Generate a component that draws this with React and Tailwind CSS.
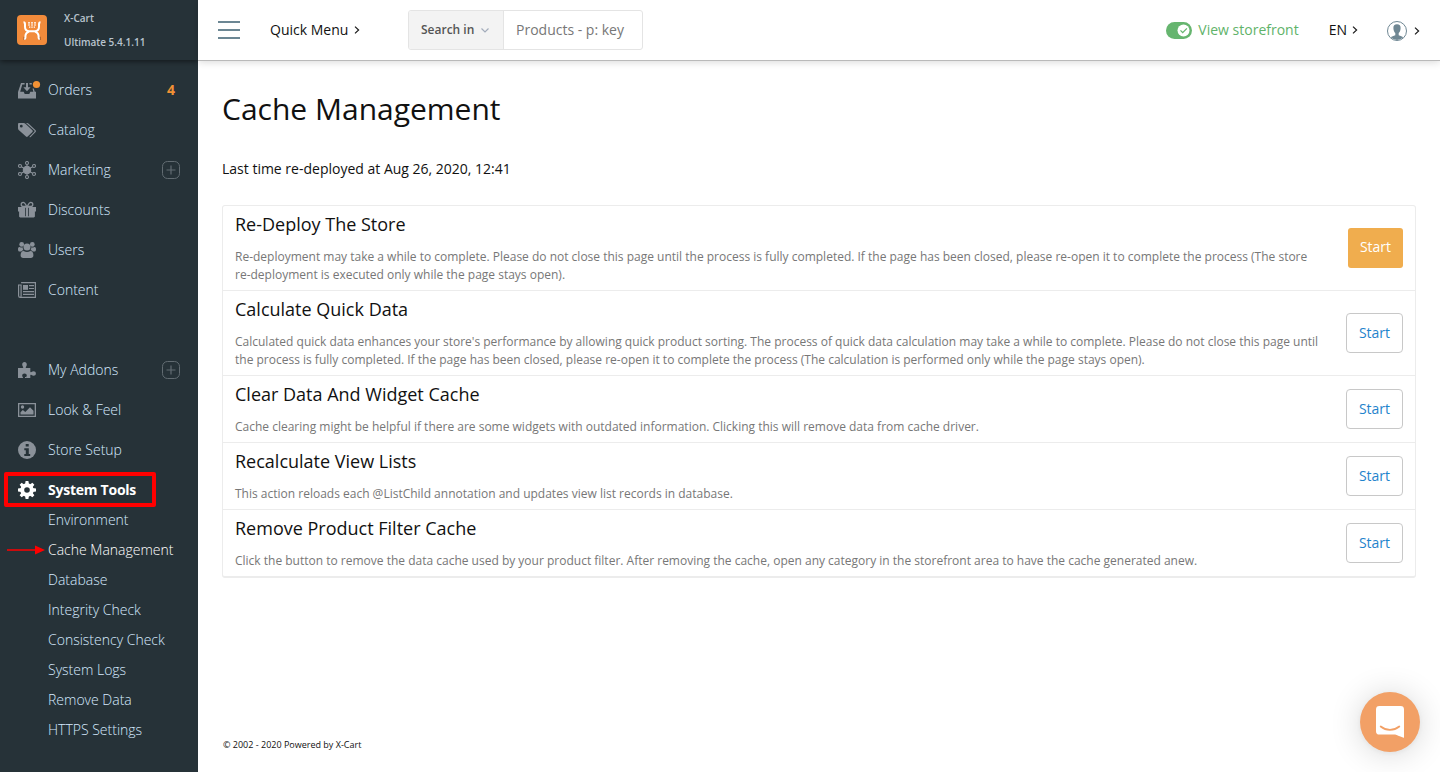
import React from 'react';

const svgProps = { width: 18, height: 18, viewBox: '0 0 18 18', fill: 'currentColor' };

const OrdersIcon = () => (
  <svg {...svgProps} className="overflow-visible">
    <path d="M0 17.500V11L3 2h3.600v1.500H4.300L2.200 10.800h3.500l1 2.200h4.600l1-2.200H18v6.700z" />
    <path d="M8 2h2v4.200h2.600L9 10.200 5.400 6.200H8z" />
    <path d="M11.500 2h2.300v1.500h-2.300zM14.500 7.500h1.300l1 3.500h-1.400z" />
    <circle cx="18.500" cy="3.500" r="3.600" fill="#f19135" />
  </svg>
);

const TagsIcon = () => (
  <svg {...svgProps}>
    <path d="M0 3.200C0 2.500.500 2 1.200 2h4.400c.600 0 1.300.300 1.800.700l7 6.500c.500.500.500 1.200 0 1.700l-4.700 4.700c-.500.500-1.200.500-1.700 0L.700 9.100C.300 8.600 0 8 0 7.300zM3.300 3.800a1.400 1.400 0 1 0 0 2.800 1.400 1.400 0 0 0 0-2.800z" fillRule="evenodd" />
    <path d="M8 2h1c.600 0 1.200.300 1.700.700l6.900 6.500c.500.500.500 1.200 0 1.700L12.700 16c-.500.400-.900.300-1.400-.100l5-5.100c.400-.500.400-.900 0-1.400z" />
  </svg>
);

const MarketingIcon = () => (
  <svg {...svgProps} fill="none" stroke="currentColor" strokeWidth="1.100">
    <circle cx="9" cy="9" r="3.700" fill="currentColor" />
    <path d="M9 3.500v11M3.400 5.800l11.200 6.400M3.400 12.200l11.200-6.400" />
    <circle cx="9" cy="2" r="1.500" />
    <circle cx="9" cy="16" r="1.500" />
    <circle cx="2" cy="5" r="1.500" />
    <circle cx="2" cy="13" r="1.500" />
    <circle cx="16" cy="5" r="1.500" />
    <circle cx="16" cy="13" r="1.500" />
  </svg>
);

const GiftIcon = () => (
  <svg {...svgProps}>
    <path d="M0 6h18v4.500h-1.100v4.800c0 .700-.500 1.200-1.200 1.200H2.300c-.700 0-1.200-.500-1.200-1.200v-4.800H0zm7 .700v8.600h.800V6.700zm3.200 0v8.600h.8V6.700z" fillRule="evenodd" />
    <path d="M8.800 5.500C7.500 3 6.800 1.400 5.200 1.400c-2.700 0-2.600 4.100 0 4.100zM9.200 5.500c1.300-2.500 2-4.100 3.600-4.100 2.700 0 2.600 4.100 0 4.100z" fill="none" stroke="currentColor" strokeWidth="1.300" />
  </svg>
);

const UsersIcon = () => (
  <svg {...svgProps}>
    <circle cx="3.700" cy="3.400" r="2.400" />
    <circle cx="14.300" cy="3.400" r="2.400" />
    <circle cx="9" cy="6" r="3.500" />
    <path d="M0 8.200C0 6.400.700 5.800 1.800 6c1.100.700 1.900.700 2.900.300 0 1.400.400 2.200 1 3-1.200 0-1.800.500-2.400 1.200H1.600C.600 10.500 0 9.700 0 8.200zM18 8.200c0-1.800-.700-2.400-1.800-2.200-1.100.700-1.900.700-2.900.300 0 1.400-.400 2.200-1 3 1.200 0 1.800.500 2.400 1.200h1.700c1 0 1.600-.800 1.600-2.300z" />
    <path d="M2.600 14.200c0-2.600 1-4.300 3-4.300 2.300 1.400 4.500 1.400 6.800 0 2 0 3 1.700 3 4.300 0 1.700-1 2.800-2.600 2.800H5.200c-1.600 0-2.600-1.100-2.600-2.800z" />
  </svg>
);

const NewsIcon = () => (
  <svg {...svgProps} fill="none" stroke="currentColor" strokeWidth="1.200">
    <path d="M3.100 1.600h14.300v14.800H2.200c-1 0-1.600-.600-1.600-1.600V4h2.500v10.800c0 .900-.300 1.600-.900 1.600" />
    <path d="M5 4h5v4.800H5z" fill="currentColor" stroke="none" />
    <path d="M11 4.600h5M11 7.500h5M5 10.600h11M5 13.400h11" />
  </svg>
);

const PuzzleIcon = () => (
  <svg {...svgProps}>
    <path d="M0 7h4.600c.700 0 .900-.300.500-.900C4.500 5.100 4.200 4.300 4.200 3.400 4.200 2 5.100 1 6.500 1s2.300 1 2.300 2.400c0 .900-.300 1.600-.9 2.600-.400.700-.200 1 .600 1h3.800v3.500c0 .700.400.9 1.100.500.800-.500 1.400-.800 2.100-.800 1.400 0 2.400.9 2.400 2.200s-1 2.300-2.400 2.300c-.700 0-1.300-.300-2-.800-.800-.500-1.200-.300-1.200.500V17H8.600c-.800 0-.900-.300-.500-.900.400-.600.700-1.100.700-1.700 0-1.300-1-2-2.300-2s-2.300.700-2.300 2c0 .700.300 1.200.700 1.800.400.500.200.800-.500.800H0z" />
  </svg>
);

const ImageIcon = () => (
  <svg {...svgProps}>
    <path d="M0 2h18v14H0zm1.300 1.300v11.400h15.400V3.300z" fillRule="evenodd" />
    <circle cx="4.500" cy="6" r="1.700" />
    <path d="M2.500 13.500V11.200L4.800 9l2.500 2 4.700-4.800 3.500 3.600v3.700z" />
  </svg>
);

const InfoIcon = () => (
  <svg {...svgProps}>
    <circle cx="9" cy="9" r="9" />
    <path d="M7.700 3h3v2.600h-3zM6.300 7.200h4.500v5.700h1.400V15H6.300v-2.100h1.500V9.300H6.300z" fill="#263238" />
  </svg>
);

const teeth = [0, 45, 90, 135];
const GearIcon = () => (
  <svg {...svgProps}>
    <path d="M9 2.300a6.700 6.700 0 1 0 0 13.400A6.700 6.700 0 0 0 9 2.300zm0 3.900a2.800 2.800 0 1 1 0 5.600 2.800 2.800 0 0 1 0-5.600z" fillRule="evenodd" />
    {teeth.map((a) => (
      <path key={a} d="M7.600 0h2.800l.6 3.500H7zM7 14.500h4l-.6 3.500H7.600z" transform={`rotate(${a} 9 9)`} />
    ))}
  </svg>
);

const PlusIcon = () => (
  <svg {...svgProps} className="text-[#626c72]" fill="none" stroke="currentColor">
    <rect x="0.500" y="0.500" width="17" height="17" rx="5" />
    <path d="M9 4.500v9M4.500 9h9" strokeWidth="1.200" />
  </svg>
);

const Chevron = () => (
  <svg width="6" height="8" viewBox="0 0 6 8" fill="none" stroke="#1a1a1a" strokeWidth="1.200">
    <path d="M1 .6L4.600 4 1 7.400" />
  </svg>
);

const mainItems = [
  { label: 'Orders', Icon: OrdersIcon, count: 4 },
  { label: 'Catalog', Icon: TagsIcon },
  { label: 'Marketing', Icon: MarketingIcon, plus: true },
  { label: 'Discounts', Icon: GiftIcon },
  { label: 'Users', Icon: UsersIcon },
  { label: 'Content', Icon: NewsIcon },
];

const systemItems = [
  { label: 'My Addons', Icon: PuzzleIcon, plus: true },
  { label: 'Look & Feel', Icon: ImageIcon },
  { label: 'Store Setup', Icon: InfoIcon },
];

const toolLinks = [
  'Environment',
  'Cache Management',
  'Database',
  'Integrity Check',
  'Consistency Check',
  'System Logs',
  'Remove Data',
  'HTTPS Settings',
];

const actions = [
  {
    title: 'Re-Deploy The Store',
    text: 'Re-deployment may take a while to complete. Please do not close this page until the process is fully completed. If the page has been closed, please re-open it to complete the process (The store re-deployment is executed only while the page stays open).',
    primary: true,
  },
  {
    title: 'Calculate Quick Data',
    text: "Calculated quick data enhances your store's performance by allowing quick product sorting. The process of quick data calculation may take a while to complete. Please do not close this page until the process is fully completed. If the page has been closed, please re-open it to complete the process (The calculation is performed only while the page stays open).",
  },
  {
    title: 'Clear Data And Widget Cache',
    text: 'Cache clearing might be helpful if there are some widgets with outdated information. Clicking this will remove data from cache driver.',
  },
  {
    title: 'Recalculate View Lists',
    text: 'This action reloads each @ListChild annotation and updates view list records in database.',
  },
  {
    title: 'Remove Product Filter Cache',
    text: 'Click the button to remove the data cache used by your product filter. After removing the cache, open any category in the storefront area to have the cache generated anew.',
  },
];

function MenuItem({ label, Icon, count, plus }) {
  return (
    <li className="flex h-10 items-center pr-[18px] pl-[18px]">
      <span className="w-[30px] shrink-0 text-[#8a9199]"><Icon /></span>
      <span className="flex-1 font-light text-[#d6eaff]">{label}</span>
      {count && <span className="pr-[5px] text-sm font-bold text-[#f19135]">{count}</span>}
      {plus && <PlusIcon />}
    </li>
  );
}

function Sidebar() {
  return (
    <aside className="flex w-[198px] shrink-0 flex-col overflow-hidden bg-[#263238] text-sm">
      <div className="z-10 flex h-[60px] shrink-0 items-center pl-[17px] shadow-[0_1px_6px_rgba(0,0,0,0.6)]">
        <svg width="30" height="30" viewBox="0 0 30 30">
          <rect width="30" height="30" rx="4" fill="#f28b3b" />
          <path d="M6.500 21.700h2v3.300h-2zM21.800 21.700h2v3.300h-2z" fill="#a85f2c" />
          <path d="M6.500 7.300c1.300 0 1.500.700 1.500 2.200v2.300c0 2.600 1.600 4.400 4.200 4.400h5.600c2.600 0 4.200-1.800 4.200-4.400V9.500c0-1.500.2-2.200 1.500-2.200M12 16.500c-2.300.8-3.600 2.700-3.600 5v1.200c0 .8-.4 1.300-1.200 1.300M18 16.500c2.300.8 3.600 2.700 3.600 5v1.200c0 .8.400 1.300 1.200 1.300" fill="none" stroke="#fff" strokeWidth="2" />
          <path d="M11 7.200h2v1.300h-2zM14 7.200h2v1.300h-2zM17 7.200h2v1.300h-2zM11 9.400h2v1.200h-2zM14 9.400h2v1.200h-2zM17 9.400h2v1.200h-2zM12 11.500h1.300v1.200H12zM14.300 11.500h1.400v1.200h-1.400zM16.700 11.500H18v1.200h-1.300z" fill="#fff" />
        </svg>
        <div className="ml-[17px] text-[10px] leading-6 font-semibold text-[#b9c4ce]">
          <div>X-Cart</div>
          <div>Ultimate 5.4.1.11</div>
        </div>
      </div>
      <ul className="pt-[10px]">
        {mainItems.map((item) => <MenuItem key={item.label} {...item} />)}
      </ul>
      <ul className="pt-10">
        {systemItems.map((item) => <MenuItem key={item.label} {...item} />)}
      </ul>
      <div className="mt-0.5 ml-1 flex h-[35px] w-[152px] items-center rounded-[2px] border-4 border-[#ff0000] pl-[10px]">
        <span className="w-[30px] text-white"><GearIcon /></span>
        <span className="font-bold tracking-[-0.25px] whitespace-nowrap text-white">System Tools</span>
      </div>
      <ul className="-mt-0.5 font-light text-[#d6eaff]">
        {toolLinks.map((label) => (
          <li key={label} className="flex h-[30px] items-center">
            <span className="w-12 shrink-0 pl-[7px]">
              {label === 'Cache Management' && (
                <svg width="38" height="10" viewBox="0 0 38 10" fill="#ff0000">
                  <path d="M0 4.200h28V.500L38 5l-10 4.500V5.800H0z" />
                </svg>
              )}
            </span>
            <span className={label === 'Cache Management' ? 'whitespace-nowrap text-white' : 'whitespace-nowrap'}>{label}</span>
          </li>
        ))}
      </ul>
    </aside>
  );
}

function Header() {
  return (
    <header className="flex h-[61px] shrink-0 items-center border-b border-[#b9b9b9] pr-5 pl-5 text-sm text-[#111] shadow-[0_1px_8px_rgba(0,0,0,0.16)]">
      <svg width="22" height="18" viewBox="0 0 22 18" fill="#6c8794">
        <path d="M0 0h22v2H0zM0 8h22v2H0zM0 16h22v2H0z" />
      </svg>
      <div className="ml-[30px] flex w-[138px] items-center gap-[6px]">Quick Menu <Chevron /></div>
      <div className="flex h-10 w-[235px] overflow-hidden rounded-[3px] border border-[#e4e4e4]">
        <div className="flex w-[95px] items-center gap-[7px] border-r border-[#e4e4e4] bg-[#f3f3f3] pl-3 text-xs font-semibold whitespace-nowrap text-[#555]">
          Search in
          <svg width="8" height="5" viewBox="0 0 8 5" fill="none" stroke="#a3acbb" strokeWidth="1.200"><path d="M.5.500L4 4 7.500.500" /></svg>
        </div>
        <div className="flex items-center pl-3 text-[#777]">Products - p: key</div>
      </div>
      <div className="ml-auto flex items-center gap-[6px] text-[#5fb36a]">
        <svg width="26" height="17" viewBox="0 0 26 17">
          <rect width="26" height="17" rx="8.500" fill="#66b56f" />
          <circle cx="17.500" cy="8.500" r="6" fill="#fff" />
          <path d="M14.500 8.400l2.200 2.200 4.200-4.200" fill="none" stroke="#66b56f" strokeWidth="1.300" />
        </svg>
        View storefront
      </div>
      <div className="ml-[30px] flex items-center gap-[5px]">EN <Chevron /></div>
      <div className="ml-[29px] flex items-center gap-[7px] pt-px">
        <svg width="20" height="20" viewBox="0 0 20 20">
          <circle cx="10" cy="10" r="9.500" fill="#fff" stroke="#6f8793" />
          <path d="M10 3.200c2.500 0 3.800 1.500 3.600 4-.1 2.300-.8 3.800-1.900 4.700v2.300c1.800.900 3.600 1 4.600 2.100A9 9 0 0 1 10 19a9 9 0 0 1-6.300-2.700c1-1.100 2.800-1.200 4.600-2.100v-2.300c-1.100-.9-1.800-2.400-1.900-4.700-.2-2.500 1.100-4 3.600-4z" fill="#6f8793" />
        </svg>
        <Chevron />
      </div>
    </header>
  );
}

export default function App() {
  return (
    <div className="flex h-[772px] w-full overflow-hidden bg-white font-['Open_Sans',sans-serif]">
      <Sidebar />
      <div className="flex min-w-0 flex-1 flex-col">
        <Header />
        <main className="flex flex-1 flex-col pr-6 pl-6">
          <h1 className="mt-[28px] text-[30px] leading-10 text-[#111]">Cache Management</h1>
          <p className="mt-[30px] text-sm leading-5 text-[#111]">Last time re-deployed at Aug 26, 2020, 12:41</p>
          <ul className="mt-[26px] divide-y divide-[#ececec] rounded-[3px] border border-b-2 border-[#ececec]">
            {actions.map(({ title, text, primary }) => (
              <li key={title} className="flex items-center justify-between px-3 py-1.5">
                <div className="w-[1087px]">
                  <h2 className="text-lg leading-6 text-[#111]">{title}</h2>
                  <p className="mt-3 text-xs leading-[18px] text-[#777]">{text}</p>
                </div>
                <button
                  className={
                    primary
                      ? 'h-10 w-[55px] rounded-[3px] bg-[#f0ad4e] pb-0.5 text-sm text-white'
                      : 'h-10 w-[57px] rounded-[4px] border border-[#c8c8c8] bg-white text-sm text-[#1f84cc]'
                  }
                >
                  Start
                </button>
              </li>
            ))}
          </ul>
          <footer className="mt-auto mb-5 pl-px text-[9px] leading-[14px] text-[#111]">© 2002 - 2020 Powered by X-Cart</footer>
        </main>
      </div>
      <button className="fixed right-5 bottom-5 flex size-[60px] items-center justify-center rounded-full bg-[#f2a066] shadow-[0_1px_6px_rgba(0,0,0,0.06),0_2px_32px_rgba(0,0,0,0.16)]">
        <svg width="28" height="32" viewBox="0 0 28 32">
          <path d="M28 32s-4.700-1.800-8.900-3.400H3.400A3.400 3.400 0 0 1 0 25.200V3.400A3.400 3.400 0 0 1 3.400 0h21.200A3.400 3.400 0 0 1 28 3.400z" fill="#fff" />
          <path d="M4.700 20.500c5.500 4.500 13 4.500 18.600 0" fill="none" stroke="#f2a066" strokeWidth="1.800" strokeLinecap="round" />
        </svg>
      </button>
    </div>
  );
}
